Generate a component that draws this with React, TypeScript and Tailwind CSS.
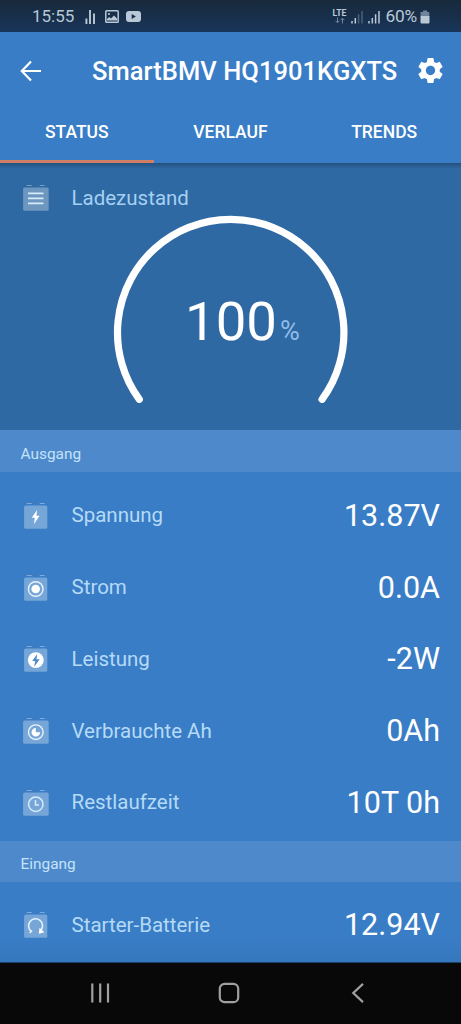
import React from 'react';

type IconType = 'lines' | 'bolt' | 'current' | 'power' | 'consumed' | 'clock' | 'starter';

interface Reading {
  label: string;
  value: string;
  icon: IconType;
}

const outputs: Reading[] = [
  { label: 'Spannung', value: '13.87V', icon: 'bolt' },
  { label: 'Strom', value: '0.0A', icon: 'current' },
  { label: 'Leistung', value: '-2W', icon: 'power' },
  { label: 'Verbrauchte Ah', value: '0Ah', icon: 'consumed' },
  { label: 'Restlaufzeit', value: '10T 0h', icon: 'clock' },
];

const inputs: Reading[] = [{ label: 'Starter-Batterie', value: '12.94V', icon: 'starter' }];

const getGlyph = (type: IconType) => {
  switch (type) {
    case 'lines':
      return <path d="M6 9.3h15.5M6 14.3h15.5M6 19.3h15.5" stroke="#d6ebfa" strokeWidth="1.8" />;
    case 'bolt':
      return <path d="M15 8L9.8 15.8H12.8L11.9 22.2L17.6 13.8H14.5Z" fill="#fff" />;
    case 'current':
      return (
        <>
          <circle cx="13.7" cy="15" r="7.3" fill="none" stroke="#e6f3fc" strokeWidth="1.4" />
          <circle cx="13.7" cy="15" r="4.3" fill="#fff" />
        </>
      );
    case 'power':
      return (
        <>
          <circle cx="13.8" cy="15.2" r="7.9" fill="#fff" />
          <path d="M15.2 9L10.2 16H13.1L12.3 21.8L17.6 14.2H14.5Z" fill="#4c8bcd" />
        </>
      );
    case 'consumed':
      return (
        <>
          <circle cx="13.8" cy="15.2" r="7.3" fill="none" stroke="#e6f3fc" strokeWidth="1.4" />
          <path d="M13.8 10.9A4.3 4.3 0 1 0 18.1 15.2H13.8Z" fill="#fff" />
        </>
      );
    case 'clock':
      return (
        <>
          <circle cx="13.8" cy="15.2" r="7.2" fill="none" stroke="#d6ebfa" strokeWidth="1.5" />
          <path d="M13.5 11V16H17" fill="none" stroke="#d6ebfa" strokeWidth="1.5" />
        </>
      );
    case 'starter':
      return (
        <>
          <path d="M9.3 20.3A7 7 0 1 1 19 19.2" fill="none" stroke="#e6f3fc" strokeWidth="1.5" />
          <path d="M6.8 21.7l2.8-2.8 1 1.2-2.2 2.1z" fill="#e6f3fc" />
          <path d="M17.5 16.8L22.4 21.2L16.8 22.7Z" fill="#fff" />
        </>
      );
  }
};

const BatteryIcon: React.FC<{ type: IconType }> = ({ type }) => {
  const wide = type === 'lines' || type === 'consumed' || type === 'clock';
  return (
    <svg className="w-7 h-7 shrink-0" viewBox="0 0 28 28">
      <path d="M4.7 1.5h5M17.7 1.5h5" stroke="#fff" strokeOpacity="0.35" strokeWidth="1.1" />
      <rect
        x={wide ? 1.1 : 2.1}
        y="3.6"
        width={wide ? 25.6 : 23.2}
        height="23.2"
        rx="1.5"
        fill="#fff"
        fillOpacity="0.31"
      />
      {getGlyph(type)}
    </svg>
  );
};

const StatusBar = () => (
  <div className="h-8 shrink-0 flex items-center justify-between pl-8 pr-[31px] pt-px bg-gradient-to-b from-[#18293b] to-[#18355a] text-[#b9c8d6]">
    <div className="flex items-center">
      <span className="text-[17px] w-[44px]">15:55</span>
      <svg className="w-[11px] h-4 ml-[9px]" viewBox="0 0 11 16">
        <path d="M1.4 15V9.5M5 15V1M9 15V4.5" stroke="currentColor" strokeWidth="1.9" />
      </svg>
      <svg className="w-[14px] h-[13px] ml-[9px]" viewBox="0 0 14 13">
        <rect x="0.8" y="0.8" width="12.4" height="11.4" rx="0.8" fill="none" stroke="currentColor" strokeWidth="1.5" />
        <path d="M2 10.5V9L4.2 7L6 8.4L9 5.6L12.2 8.7V10.5Z" fill="currentColor" />
        <circle cx="4" cy="4" r="1.1" fill="currentColor" />
      </svg>
      <svg className="w-[15px] h-[11px] ml-[7px]" viewBox="0 0 15 11">
        <rect width="15" height="11" rx="3" fill="currentColor" />
        <path d="M5.7 3v5l4.2-2.5z" fill="#182e46" />
      </svg>
    </div>
    <div className="flex items-center">
      <div className="flex flex-col items-center w-[14px]">
        <span className="text-[8.6px] leading-[8px] font-bold">LTE</span>
        <svg className="w-[10px] h-[7px]" viewBox="0 0 10 7">
          <path d="M2.5 0.5v5M0.6 3.8l1.9 2 1.9-2M7.5 6.5v-5M5.6 3.2l1.9-2 1.9 2" fill="none" stroke="#71839a" strokeWidth="1" />
        </svg>
      </div>
      <svg className="w-3 h-[14px] ml-1" viewBox="0 0 12 14">
        <path d="M1 13.5V11M4.3 13.5V8" stroke="currentColor" strokeWidth="1.5" />
        <path d="M7.6 13.5V4.3M11 13.5V1" stroke="#4b6078" strokeWidth="1.5" />
      </svg>
      <svg className="w-3 h-[14px] ml-[5px]" viewBox="0 0 12 14">
        <path d="M1 13.5V11M4.3 13.5V8M7.6 13.5V4.3M11 13.5V1" stroke="currentColor" strokeWidth="1.5" />
      </svg>
      <span className="text-[17.3px] ml-[6px] tracking-[-0.2px]">60%</span>
      <svg className="w-[10px] h-[14px] ml-[3px]" viewBox="0 0 10 14">
        <path d="M3 0.5h4v1.5h2.3V6H0.5V2H3z" fill="#71839a" />
        <path d="M0.5 6h9v6.5a1 1 0 0 1-1 1h-7a1 1 0 0 1-1-1z" fill="currentColor" />
      </svg>
    </div>
  </div>
);

const ReadingRow: React.FC<{ item: Reading }> = ({ item }) => (
  <div className="h-[71.7px] flex items-center pl-[22px] pr-[21px]">
    <BatteryIcon type={item.icon} />
    <span className="ml-[21.5px] text-[20.5px] text-[#b5daf6]">{item.label}</span>
    <span className="ml-auto text-[30.5px] text-white">{item.value}</span>
  </div>
);

export default function App() {
  return (
    <div className="w-[461px] h-[1024px] flex flex-col overflow-hidden bg-[#397dc6] font-['Roboto',sans-serif]">
      <StatusBar />

      <header className="h-[131px] flex flex-col shrink-0 text-white font-medium">
        <div className="h-[77px] flex items-center pl-[20px] pr-[15px]">
          <svg className="w-[22px] h-[22px]" viewBox="0 0 22 22">
            <path d="M11 1.5L1.8 11L11 20.5M2 11H21" fill="none" stroke="currentColor" strokeWidth="2.2" />
          </svg>
          <h1 className="ml-[50px] pt-px text-[25.5px] tracking-[0.05px] whitespace-nowrap">SmartBMV HQ1901KGXTS</h1>
          <svg className="w-[31px] h-[31px] ml-auto shrink-0" viewBox="0 0 24 24" fill="currentColor">
            <path d="M19.14 12.94c.04-.3.06-.61.06-.94 0-.32-.02-.64-.07-.94l2.03-1.58c.18-.14.23-.41.12-.61l-1.92-3.32c-.12-.22-.37-.29-.59-.22l-2.39.96c-.5-.38-1.03-.7-1.62-.94l-.36-2.54c-.04-.24-.24-.41-.48-.41h-3.84c-.24 0-.43.17-.47.41l-.36 2.54c-.59.24-1.13.57-1.62.94l-2.39-.96c-.22-.08-.47 0-.59.22L2.74 8.87c-.12.21-.08.47.12.61l2.03 1.58c-.05.3-.09.63-.09.94s.02.64.07.94l-2.03 1.58c-.18.14-.23.41-.12.61l1.92 3.32c.12.22.37.29.59.22l2.39-.96c.5.38 1.03.7 1.62.94l.36 2.54c.05.24.24.41.48.41h3.84c.24 0 .44-.17.47-.41l.36-2.54c.59-.24 1.13-.56 1.62-.94l2.39.96c.22.08.47 0 .59-.22l1.92-3.32c.12-.22.07-.47-.12-.61l-2.01-1.58zM12 15.6c-1.98 0-3.6-1.62-3.6-3.6s1.62-3.6 3.6-3.6 3.6 1.62 3.6 3.6-1.62 3.6-3.6 3.6z" />
          </svg>
        </div>
        <nav className="flex-1 grid grid-cols-3 text-[17.5px]">
          <div className="pt-[10px] text-center border-b-[3px] border-[#d07f65]">STATUS</div>
          <div className="pt-[10px] text-center">VERLAUF</div>
          <div className="pt-[10px] text-center">TRENDS</div>
        </nav>
      </header>

      <section className="h-[267px] shrink-0 bg-[#2e69a4] bg-linear-to-b from-[#25527f] to-[#2e69a4] to-[6px]">
        <div className="relative h-full">
          <div className="flex items-center pl-[22px] pt-[21px]">
            <BatteryIcon type="lines" />
            <span className="ml-[21.5px] text-[20.5px] leading-7 text-[#a5d0f3]">Ladezustand</span>
          </div>
          {/* Charge gauge */}
          <svg className="absolute left-[110px] top-[48px] w-[241px] h-[200px]" viewBox="0 0 241 200">
            <path
              d="M29.3 188.3A113.2 113.2 0 1 1 212.1 188.3"
              fill="none"
              stroke="#fff"
              strokeWidth="7.2"
              strokeLinecap="round"
            />
          </svg>
          <div className="absolute left-[185px] top-[125px] flex items-baseline">
            <span className="text-[54.5px] leading-[66px] text-white">100</span>
            <span className="ml-[3px] text-[27px] text-[#8fbde8]">%</span>
          </div>
        </div>
      </section>

      <div className="h-[42px] shrink-0 flex items-center pl-[20.5px] pt-[8px] bg-[#4e8acb] text-[15.4px] text-[#c4e2fa]">
        Ausgang
      </div>
      <div className="pt-[8px] h-[369px] shrink-0">
        {outputs.map((item) => (
          <ReadingRow key={item.label} item={item} />
        ))}
      </div>

      <div className="h-[41px] shrink-0 flex items-center pl-[20.5px] pt-[7px] bg-[#4e8acb] text-[15.4px] text-[#c4e2fa]">
        Eingang
      </div>
      <div className="pt-[7.5px] h-[80px] shrink-0 bg-gradient-to-b from-[#397dc6] from-70% to-[#3577bd]">
        {inputs.map((item) => (
          <ReadingRow key={item.label} item={item} />
        ))}
      </div>

      <footer className="flex-1 border-t border-[#1e4267] bg-[#080808] text-[#a0a0a0] flex items-center pl-[90px] pb-[2px]">
        <svg className="w-5 h-5" viewBox="0 0 20 20">
          <path d="M2.3 0.5v19M10.2 0.5v19M18 0.5v19" stroke="currentColor" strokeWidth="2.2" />
        </svg>
        <svg className="w-[22px] h-[22px] ml-[108px]" viewBox="0 0 22 22">
          <rect x="1.8" y="1.8" width="18.4" height="18.4" rx="4.8" fill="none" stroke="currentColor" strokeWidth="2.2" />
        </svg>
        <svg className="w-[13px] h-5 ml-[111px]" viewBox="0 0 13 20">
          <path d="M12 0.9L2.3 10L12 19.1" fill="none" stroke="currentColor" strokeWidth="2.2" />
        </svg>
      </footer>
    </div>
  );
}
